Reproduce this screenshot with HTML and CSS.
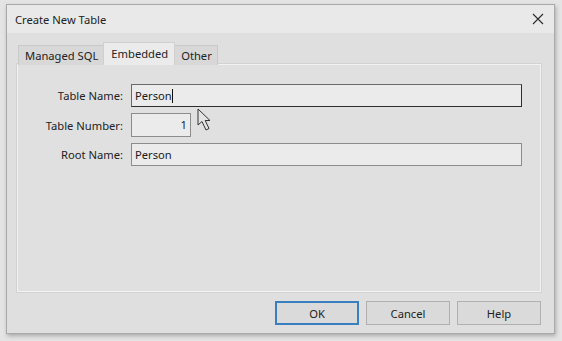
FILE: index.html
```html
<!DOCTYPE html>
<html>

<head>
    <meta charset="utf-8">
    <title>Create New Table</title>
    <link rel="stylesheet" href="styles.css">
</head>

<body>
    <div class="window">
        <div class="titlebar">
            <span class="title">Create New Table</span>
            <svg class="close" width="12" height="12" viewBox="0 0 12 12">
                <path d="M1 1 L11 11 M11 1 L1 11" stroke="#2b2b2b" stroke-width="1.1" fill="none"/>
            </svg>
        </div>
        <div class="content">
            <div class="tabs">
                <div class="tab">Managed SQL</div>
                <div class="tab active">Embedded</div>
                <div class="tab">Other</div>
            </div>
            <div class="panel">
                <div class="form">
                    <label>Table Name:</label>
                    <div class="field focused">Person<span class="caret"></span></div>
                    <label>Table Number:</label>
                    <div class="field number">1</div>
                    <label>Root Name:</label>
                    <div class="field">Person</div>
                </div>
            </div>
            <div class="buttons">
                <button class="default">OK</button>
                <button>Cancel</button>
                <button>Help</button>
            </div>
        </div>
    </div>
    <svg class="pointer" width="17" height="26" viewBox="0 0 17 26">
        <path d="M1 1 L1 17 L5 13.5 L9 22 L12 20.5 L8.2 12.5 L13 12.5 Z" fill="#e4e4e4" stroke="#333" stroke-width="1" stroke-linejoin="miter"/>
    </svg>
</body>

</html>
```

FILE: styles.css
```css
body {
    margin: 0;
    background-color: #e4e4e4;
    font: 11.2px "Noto Sans", "Open Sans", sans-serif;
    color: #1e1e1e;
    position: relative;
    height: 341px;
    overflow: hidden;
}

.window {
    margin: 4px 0 0 6px;
    width: 547px;
    height: 328px;
    border: 1px solid #a9a9a9;
    background-color: #dfdfdf;
    box-shadow: 1px 2px 4px rgba(0, 0, 0, 0.25);
    display: flex;
    flex-direction: column;
}

.titlebar {
    height: 28px;
    background-color: #e9e9e9;
    display: flex;
    align-items: center;
    justify-content: space-between;
    padding: 0 10px 0 8px;
}

.title {
    color: #222;
}

.content {
    flex: 1;
    display: flex;
    flex-direction: column;
    padding: 10px 13px 8px 10px;
}

.tabs {
    display: flex;
    padding-left: 1px;
    height: 22px;
    align-items: flex-end;
    margin-bottom: -1px;
    position: relative;
    z-index: 1;
}

.tab {
    height: 19px;
    line-height: 19px;
    padding: 0 5px 0 6px;
    background-color: #d8d8d8;
    border: 1px solid #c9c9c9;
    border-bottom: none;
    color: #222;
}

.tab + .tab {
    margin-left: -1px;
}

.tab.active {
    height: 22px;
    line-height: 21px;
    background-color: #ebebeb;
    border-color: #d0d0d0;
    padding: 0 6px 0 7px;
    position: relative;
    z-index: 2;
}

.panel {
    flex: 1;
    background-color: #e0e0e0;
    border: 1px solid #f2f2f2;
    outline: 1px solid #d2d2d2;
    padding: 19px 18px 0 0;
}

.form {
    display: grid;
    grid-template-columns: 105px 1fr;
    column-gap: 8px;
    row-gap: 6px;
    align-items: center;
}

.form label {
    text-align: right;
    color: #222;
}

.field {
    height: 21px;
    line-height: 21px;
    background-color: #ebebeb;
    border: 1px solid #8c8c8c;
    padding: 0 3px;
    color: #1a1a1a;
}

.field.focused {
    border-color: #6a6a6a #2e2e2e #2e2e2e #6a6a6a;
}

.field.number {
    width: 52px;
    text-align: right;
    height: 22px;
    line-height: 22px;
}

.caret {
    display: inline-block;
    width: 1px;
    height: 14px;
    background-color: #111;
    vertical-align: -3px;
}

.buttons {
    display: flex;
    justify-content: flex-end;
    gap: 7px;
    margin-top: 9px;
}

button {
    width: 84px;
    height: 24px;
    background-color: #dadada;
    border: 1px solid #b0b0b0;
    font: 11.2px "Noto Sans", "Open Sans", sans-serif;
    color: #222;
    padding: 0;
}

button.default {
    border: 2px solid #3a80c0;
}

.pointer {
    position: absolute;
    left: 197px;
    top: 108px;
}
```
